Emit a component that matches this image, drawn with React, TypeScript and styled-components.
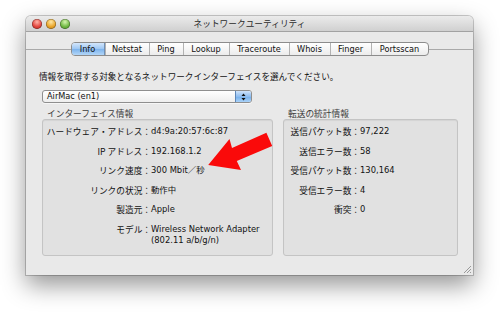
import React from 'react';
import styled, { createGlobalStyle, css } from 'styled-components';

const GlobalStyle = createGlobalStyle`
  html, body {
    margin: 0;
    padding: 0;
    background: #ffffff;
  }

  body {
    width: 500px;
    height: 312px;
    overflow: hidden;
    font-family: 'Noto Sans CJK JP', sans-serif;
    color: #111;
  }
`;

const latin = `'DejaVu Sans', 'Noto Sans CJK JP', sans-serif`;

const Page = styled.div`
  width: 500px;
  height: 312px;
  padding: 16px 0 0 26px;
  box-sizing: border-box;
`;

const Window = styled.div`
  position: relative;
  width: 447px;
  height: 259px;
  display: flex;
  flex-direction: column;
  border-radius: 5px 5px 0 0;
  background: #e9e9e9;
  box-shadow: 0 0 0 1px rgba(0, 0, 0, 0.2), 0 10px 24px rgba(0, 0, 0, 0.42);
`;

const TitleBar = styled.div`
  height: 15px;
  flex-shrink: 0;
  display: flex;
  align-items: center;
  position: relative;
  border-radius: 5px 5px 0 0;
  background: linear-gradient(#ebebeb, #d0d0d0);
  border-bottom: 1px solid #a2a2a2;
`;

const Lights = styled.div`
  display: flex;
  gap: 4px;
  padding-left: 6px;
`;

const lightColors = {
  red: ['#ffb3a8', '#e2463e', '#9e1c16'],
  yellow: ['#ffe9a6', '#e9a52a', '#a86a0c'],
  green: ['#d6f5b0', '#6fb843', '#3c7a1c'],
};

const Light = styled.span<{ $c: keyof typeof lightColors }>`
  width: 10px;
  height: 10px;
  border-radius: 50%;
  ${({ $c }) => css`
    background: radial-gradient(circle at 50% 30%, ${lightColors[$c][0]} 0%, ${lightColors[$c][1]} 55%, ${lightColors[$c][2]} 100%);
  `}
  box-shadow: inset 0 0 0 0.5px rgba(0, 0, 0, 0.45);
`;

const Title = styled.div`
  position: absolute;
  left: 0;
  right: 0;
  text-align: center;
  font-size: 8.7px;
  line-height: 15px;
  color: #2a2a2a;
  pointer-events: none;
`;

const Content = styled.div`
  flex: 1;
  display: flex;
  flex-direction: column;
  padding: 10px 15px 19px 16px;
`;

const TabRow = styled.div`
  display: flex;
  align-items: center;
  margin: 0 -15px 0 -16px;
`;

const TabLine = styled.div`
  flex: 1;
  height: 1px;
  background: #a9a9a9;
`;

const Tabs = styled.div`
  display: flex;
  height: 14px;
  border: 1px solid #8c8c8c;
  border-radius: 4px;
  overflow: hidden;
  box-sizing: border-box;
  background: linear-gradient(#ffffff, #ececec);
`;

const Tab = styled.div<{ $w: number; $active?: boolean }>`
  width: ${({ $w }) => $w}px;
  display: flex;
  align-items: center;
  justify-content: center;
  font-family: ${latin};
  font-size: 8.2px;
  color: #111;
  border-left: 1px solid #b2b2b2;
  box-sizing: border-box;

  &:first-child {
    border-left: none;
  }

  ${({ $active }) =>
    $active &&
    css`
      background: linear-gradient(#d3e6fb, #9cc6f3 50%, #7db3ec 51%, #b2d6f8);
      border-right: 1px solid #6f8fb5;
    `}
`;

const Instruction = styled.div`
  margin: 15px 0 0 -3px;
  font-size: 8.6px;
  line-height: 11px;
  white-space: nowrap;
`;

const Popup = styled.div`
  margin-top: 8px;
  width: 210px;
  height: 13px;
  display: flex;
  box-sizing: border-box;
  border: 1px solid #8f8f8f;
  border-radius: 3px;
  overflow: hidden;
  background: linear-gradient(#ffffff, #eeeeee);
  box-shadow: 0 1px 0 rgba(255, 255, 255, 0.6);
`;

const PopupText = styled.div`
  flex: 1;
  padding-left: 4px;
  font-family: ${latin};
  font-size: 8.2px;
  line-height: 11px;
`;

const Stepper = styled.div`
  width: 15px;
  display: flex;
  align-items: center;
  justify-content: center;
  border-left: 1px solid #5d86b8;
  background: linear-gradient(#cfe3fa, #8ebdf0 50%, #73aeea 51%, #aad2f8);
`;

const Groups = styled.div`
  flex: 1;
  display: flex;
  gap: 10px;
  margin-top: 5px;
`;

const Group = styled.div<{ $w: number }>`
  width: ${({ $w }) => $w}px;
  display: flex;
  flex-direction: column;
`;

const GroupTitle = styled.div`
  padding-left: 5px;
  font-size: 8.7px;
  line-height: 11px;
  color: #3c3c3c;
`;

const GroupBox = styled.div<{ $label: number }>`
  flex: 1;
  display: grid;
  grid-template-columns: ${({ $label }) => $label}px 1fr;
  grid-auto-rows: min-content;
  row-gap: 8.6px;
  align-content: start;
  padding-top: 6px;
  border: 1px solid #c4c4c4;
  border-radius: 3px;
  background: #e1e1e1;
  box-shadow: inset 0 1px 1px rgba(0, 0, 0, 0.06);
  line-height: 11px;
`;

const Label = styled.div`
  text-align: right;
  white-space: nowrap;
  font-size: 8.7px;
`;

const Value = styled.div<{ $multi?: boolean }>`
  white-space: ${({ $multi }) => ($multi ? 'pre' : 'nowrap')};
  font-family: ${latin};
  font-size: 8.4px;
`;

const Arrow = styled.svg`
  position: absolute;
  left: 0;
  top: 0;
  pointer-events: none;
`;

const Grip = styled.svg`
  position: absolute;
  right: 1px;
  bottom: 1px;
`;

const tabs = [
  { name: 'Info', w: 33 },
  { name: 'Netstat', w: 44 },
  { name: 'Ping', w: 34 },
  { name: 'Lookup', w: 46 },
  { name: 'Traceroute', w: 60 },
  { name: 'Whois', w: 41 },
  { name: 'Finger', w: 41 },
  { name: 'Portsscan', w: 57 },
];

const interfaceInfo = [
  { label: 'ハードウェア・アドレス：', value: 'd4:9a:20:57:6c:87' },
  { label: 'IP アドレス：', value: '192.168.1.2' },
  { label: 'リンク速度：', value: '300 Mbit／秒' },
  { label: 'リンクの状況：', value: '動作中' },
  { label: '製造元：', value: 'Apple' },
  { label: 'モデル：', value: 'Wireless Network Adapter\n(802.11 a/b/g/n)' },
];

const transferInfo = [
  { label: '送信パケット数：', value: '97,222' },
  { label: '送信エラー数：', value: '58' },
  { label: '受信パケット数：', value: '130,164' },
  { label: '受信エラー数：', value: '4' },
  { label: '衝突：', value: '0' },
];

const App = () => {
  return (
    <Page>
      <GlobalStyle />
      <Window>
        <TitleBar>
          <Lights>
            <Light $c="red" />
            <Light $c="yellow" />
            <Light $c="green" />
          </Lights>
          <Title>ネットワークユーティリティ</Title>
        </TitleBar>

        <Content>
          <TabRow>
            <TabLine />
            <Tabs>
              {tabs.map(({ name, w }, index) => (
                <Tab key={name} $w={w} $active={index === 0}>
                  {name}
                </Tab>
              ))}
            </Tabs>
            <TabLine />
          </TabRow>

          <Instruction>情報を取得する対象となるネットワークインターフェイスを選んでください。</Instruction>

          <Popup>
            <PopupText>AirMac (en1)</PopupText>
            <Stepper>
              <svg width="5" height="8" viewBox="0 0 5 8">
                <path d="M2.5 0.5 L4.5 3 L0.5 3 Z M2.5 7.5 L4.5 5 L0.5 5 Z" fill="#111" />
              </svg>
            </Stepper>
          </Popup>

          <Groups>
            <Group $w={231}>
              <GroupTitle>インターフェイス情報</GroupTitle>
              <GroupBox $label={108}>
                {interfaceInfo.map(({ label, value }) => (
                  <React.Fragment key={label}>
                    <Label>{label}</Label>
                    <Value $multi={value.includes('\n')}>{value}</Value>
                  </React.Fragment>
                ))}
              </GroupBox>
            </Group>
            <Group $w={175}>
              <GroupTitle>転送の統計情報</GroupTitle>
              <GroupBox $label={76}>
                {transferInfo.map(({ label, value }) => (
                  <React.Fragment key={label}>
                    <Label>{label}</Label>
                    <Value>{value}</Value>
                  </React.Fragment>
                ))}
              </GroupBox>
            </Group>
          </Groups>
        </Content>

        <Grip width="10" height="10" viewBox="0 0 10 10">
          <path d="M9 2 L2 9 M9 5 L5 9 M9 8 L8 9" stroke="#9a9a9a" strokeWidth="1" />
        </Grip>

        <Arrow width="447" height="259" viewBox="0 0 447 259">
          <polygon
            points="240.4,116.8 246.2,130 210.8,145 215,154 182.2,149 203.5,123 206,132"
            fill="#fa0a0a"
          />
        </Arrow>
      </Window>
    </Page>
  );
};

export default App;
